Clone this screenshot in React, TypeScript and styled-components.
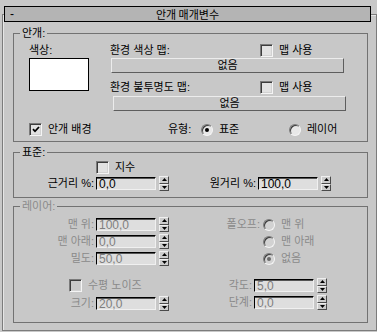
import React from 'react';
import styled, { createGlobalStyle } from 'styled-components';

const GlobalStyle = createGlobalStyle`
  html, body {
    margin: 0;
    padding: 0;
    background: #c8c8c8;
  }
  body {
    font-family: 'Liberation Sans', 'Noto Sans CJK KR', sans-serif;
    font-size: 11px;
    color: #000;
  }
`;

const DISABLED = '#8a8a8a';

const CheckBox = ({ checked, disabled }: { checked?: boolean; disabled?: boolean }) => (
  <Box $disabled={disabled}>
    {checked && (
      <svg width="8" height="7" viewBox="0 0 8 7">
        <path d="M1 3.2 L3 5.3 L7 1" stroke="#000" strokeWidth="1.8" fill="none" />
      </svg>
    )}
  </Box>
);

const SpinField = ({
  label,
  value,
  labelWidth,
  disabled,
}: {
  label: string;
  value: string;
  labelWidth: number;
  disabled?: boolean;
}) => (
  <FieldRow>
    <FieldLabel $width={labelWidth} $disabled={disabled}>
      {label}
    </FieldLabel>
    <NumInput $disabled={disabled}>{value}</NumInput>
    <Spinner>
      <SpinHalf>
        <svg width="5" height="3" viewBox="0 0 5 3">
          <path d="M2.5 0 L5 3 L0 3 Z" fill="#000" />
        </svg>
      </SpinHalf>
      <SpinHalf>
        <svg width="5" height="3" viewBox="0 0 5 3">
          <path d="M0 0 L5 0 L2.5 3 Z" fill="#000" />
        </svg>
      </SpinHalf>
    </Spinner>
  </FieldRow>
);

const App = () => {
  return (
    <Dialog>
      <GlobalStyle />
      <RolloutHeader>
        <HeaderDash>-</HeaderDash>
        <HeaderTitle>안개 매개변수</HeaderTitle>
      </RolloutHeader>
      <Panel>
        <Group $height={116}>
          <Legend>안개:</Legend>
          <FogBody>
            <ColorColumn>
              <TextLine>색상:</TextLine>
              <Swatch />
            </ColorColumn>
            <MapColumn>
              <MapRow>
                <MapLabel>환경 색상 맵:</MapLabel>
                <Item>
                  <CheckBox />
                  <span>맵 사용</span>
                </Item>
              </MapRow>
              <MapButton $top={1}>없음</MapButton>
              <MapRow $top={8}>
                <MapLabel>환경 불투명도 맵:</MapLabel>
                <Item>
                  <CheckBox />
                  <span>맵 사용</span>
                </Item>
              </MapRow>
              <MapButton $top={2} $shift={2}>
                없음
              </MapButton>
            </MapColumn>
            <OptionRow>
              <Item $width={139}>
                <CheckBox checked />
                <span>안개 배경</span>
              </Item>
              <TypeLabel>유형:</TypeLabel>
              <Item $width={88}>
                <Radio $checked />
                <span>표준</span>
              </Item>
              <Item>
                <Radio />
                <span>레이어</span>
              </Item>
            </OptionRow>
          </FogBody>
        </Group>

        <Group $height={53} $top={3}>
          <Legend>표준:</Legend>
          <StandardBody>
            <ExpRow>
              <Item>
                <CheckBox />
                <span>지수</span>
              </Item>
            </ExpRow>
            <RangeRow>
              <SpinField label="근거리 %:" value="0,0" labelWidth={82} />
              <SpinField label="원거리 %:" value="100,0" labelWidth={89} />
            </RangeRow>
          </StandardBody>
        </Group>

        <Group $height={124} $top={1}>
          <Legend $disabled>레이어:</Legend>
          <LayerBody>
            <LayerColumn>
              <SpinField label="맨 위:" value="100,0" labelWidth={82} disabled />
              <Stack $top={2}>
                <SpinField label="맨 아래:" value="0,0" labelWidth={82} disabled />
              </Stack>
              <Stack $top={2}>
                <SpinField label="밀도:" value="50,0" labelWidth={82} disabled />
              </Stack>
              <NoiseRow>
                <Item $disabled>
                  <CheckBox disabled />
                  <span>수평 노이즈</span>
                </Item>
              </NoiseRow>
              <Stack $top={4}>
                <SpinField label="크기:" value="20,0" labelWidth={82} disabled />
              </Stack>
            </LayerColumn>
            <LayerColumn>
              <FalloffRow>
                <FalloffLabel>폴오프:</FalloffLabel>
                <Item $disabled>
                  <Radio $disabled />
                  <span>맨 위</span>
                </Item>
              </FalloffRow>
              <FalloffRow $top={2}>
                <FalloffLabel />
                <Item $disabled>
                  <Radio $disabled />
                  <span>맨 아래</span>
                </Item>
              </FalloffRow>
              <FalloffRow $top={2}>
                <FalloffLabel />
                <Item $disabled>
                  <Radio $disabled $checked />
                  <span>없음</span>
                </Item>
              </FalloffRow>
              <Stack $top={12}>
                <SpinField label="각도:" value="5,0" labelWidth={85} disabled />
              </Stack>
              <Stack $top={2}>
                <SpinField label="단계:" value="0,0" labelWidth={85} disabled />
              </Stack>
            </LayerColumn>
          </LayerBody>
        </Group>
      </Panel>
    </Dialog>
  );
};
export default App;

const Dialog = styled.div`
  width: 377px;
  height: 332px;
  box-sizing: border-box;
  padding-top: 6px;
  background: #c8c8c8;
  overflow: hidden;
  font-family: 'Liberation Sans', 'Noto Sans CJK KR', sans-serif;
  font-size: 11px;
`;

const RolloutHeader = styled.div`
  position: relative;
  z-index: 1;
  margin-left: 4px;
  width: 367px;
  height: 16px;
  box-sizing: border-box;
  border: 1px solid #000;
  background: #b4b4b4;
  display: grid;
  grid-template-columns: 20px 1fr 20px;
  align-items: center;
  line-height: 13px;
`;

const HeaderDash = styled.span`
  padding-left: 5px;
  font-size: 12px;
`;

const HeaderTitle = styled.span`
  text-align: center;
  font-family: 'Noto Sans CJK KR', sans-serif;
`;

const Panel = styled.div`
  margin: -8px 0 0 2px;
  width: 375px;
  height: 317px;
  box-sizing: border-box;
  padding: 11px 0 0 10px;
  border: 1px solid #7c7c7c;
  box-shadow: inset 1px 1px 0 #e6e6e6;
`;

const Group = styled.fieldset<{ $height: number; $top?: number }>`
  margin: ${p => p.$top || 0}px 0 0 0;
  padding: 0;
  min-width: 0;
  width: 355px;
  height: ${p => p.$height}px;
  box-sizing: border-box;
  border: 1px solid #727272;
`;

const Legend = styled.legend<{ $disabled?: boolean }>`
  margin-left: 6px;
  padding: 0 2px;
  line-height: 14px;
  height: 14px;
  color: ${p => (p.$disabled ? DISABLED : '#000')};
`;

const TextLine = styled.div`
  height: 13px;
  line-height: 13px;
`;

const FogBody = styled.div`
  padding: 4px 0 0 15px;
  display: grid;
  grid-template-columns: 82px 240px;
`;

const ColorColumn = styled.div`
  display: flex;
  flex-direction: column;
`;

const Swatch = styled.div`
  margin-top: 1px;
  width: 60px;
  height: 33px;
  box-sizing: border-box;
  border: 1px solid #000;
  background: #fff;
`;

const MapColumn = styled.div`
  display: flex;
  flex-direction: column;
`;

const MapRow = styled.div<{ $top?: number }>`
  margin-top: ${p => p.$top || 0}px;
  display: flex;
  align-items: center;
  height: 13px;
  line-height: 13px;
`;

const MapLabel = styled.span`
  width: 150px;
  margin-left: -1px;
`;

const MapButton = styled.div<{ $top: number; $shift?: number }>`
  margin: ${p => p.$top}px 0 0 ${p => p.$shift || 0}px;
  width: 233px;
  height: 15px;
  box-sizing: border-box;
  border: 1px solid;
  border-color: #ececec #5e5e5e #5e5e5e #ececec;
  background: #c8c8c8;
  display: flex;
  align-items: center;
  justify-content: center;
  line-height: 13px;
`;

const OptionRow = styled.div`
  grid-column: 1 / -1;
  margin-top: 12px;
  display: flex;
  align-items: center;
  height: 13px;
`;

const TypeLabel = styled.span`
  width: 33px;
  line-height: 13px;
`;

const Item = styled.div<{ $width?: number; $disabled?: boolean }>`
  display: flex;
  align-items: center;
  gap: 6px;
  height: 13px;
  line-height: 13px;
  flex: none;
  width: ${p => (p.$width ? `${p.$width}px` : 'auto')};
  color: ${p => (p.$disabled ? DISABLED : '#000')};
`;

const Box = styled.span<{ $disabled?: boolean }>`
  flex: none;
  width: 13px;
  height: 13px;
  box-sizing: border-box;
  border: 1px solid;
  border-color: #7a7a7a #f4f4f4 #f4f4f4 #7a7a7a;
  box-shadow: inset 1px 1px 0 #3c3c3c, inset -1px -1px 0 #d2d2d2;
  background: ${p => (p.$disabled ? '#c8c8c8' : '#e2e2e2')};
  display: flex;
  align-items: center;
  justify-content: center;
`;

const Radio = styled.span<{ $checked?: boolean; $disabled?: boolean }>`
  flex: none;
  position: relative;
  width: 12px;
  height: 12px;
  box-sizing: border-box;
  border-radius: 50%;
  border: 1px solid;
  border-color: #7a7a7a #f4f4f4 #f4f4f4 #7a7a7a;
  box-shadow: inset 1px 1px 0 #3c3c3c;
  background: ${p => (p.$disabled ? '#d2d2d2' : '#e8e8e8')};
  &::after {
    content: '';
    display: ${p => (p.$checked ? 'block' : 'none')};
    position: absolute;
    left: 3px;
    top: 3px;
    width: 4px;
    height: 4px;
    border-radius: 50%;
    background: ${p => (p.$disabled ? '#6a6a6a' : '#000')};
  }
`;

const StandardBody = styled.div`
  padding-top: 2px;
`;

const ExpRow = styled.div`
  padding-left: 82px;
`;

const RangeRow = styled.div`
  margin-top: 2px;
  display: flex;
`;

const FieldRow = styled.div`
  display: flex;
  align-items: center;
  height: 15px;
`;

const FieldLabel = styled.span<{ $width: number; $disabled?: boolean }>`
  width: ${p => p.$width}px;
  box-sizing: border-box;
  padding-right: 2px;
  text-align: right;
  line-height: 13px;
  white-space: nowrap;
  color: ${p => (p.$disabled ? DISABLED : '#000')};
`;

const NumInput = styled.div<{ $disabled?: boolean }>`
  width: 60px;
  height: 13px;
  box-sizing: border-box;
  padding-left: 2px;
  border: 1px solid;
  border-color: #000 #f0f0f0 #f0f0f0 #000;
  box-shadow: inset 0 1px 0 #555;
  background: #dedede;
  font-size: 12px;
  line-height: 12px;
  color: ${p => (p.$disabled ? '#7e7e7e' : '#000')};
`;

const Spinner = styled.div`
  margin-left: 3px;
  width: 10px;
  height: 15px;
  display: flex;
  flex-direction: column;
`;

const SpinHalf = styled.span`
  flex: 1;
  box-sizing: border-box;
  border: 1px solid;
  border-color: #f0f0f0 #4a4a4a #4a4a4a #f0f0f0;
  background: #cccccc;
  display: flex;
  align-items: center;
  justify-content: center;
`;

const LayerBody = styled.div`
  padding-top: 4px;
  display: flex;
`;

const LayerColumn = styled.div`
  display: flex;
  flex-direction: column;
`;

const Stack = styled.div<{ $top: number }>`
  margin-top: ${p => p.$top}px;
`;

const NoiseRow = styled.div`
  margin-top: 13px;
  padding-left: 55px;
`;

const FalloffRow = styled.div<{ $top?: number }>`
  margin-top: ${p => p.$top || 0}px;
  display: flex;
  align-items: center;
  height: 15px;
`;

const FalloffLabel = styled.span`
  width: 94px;
  box-sizing: border-box;
  padding-right: 3px;
  text-align: right;
  line-height: 13px;
  color: ${DISABLED};
`;
